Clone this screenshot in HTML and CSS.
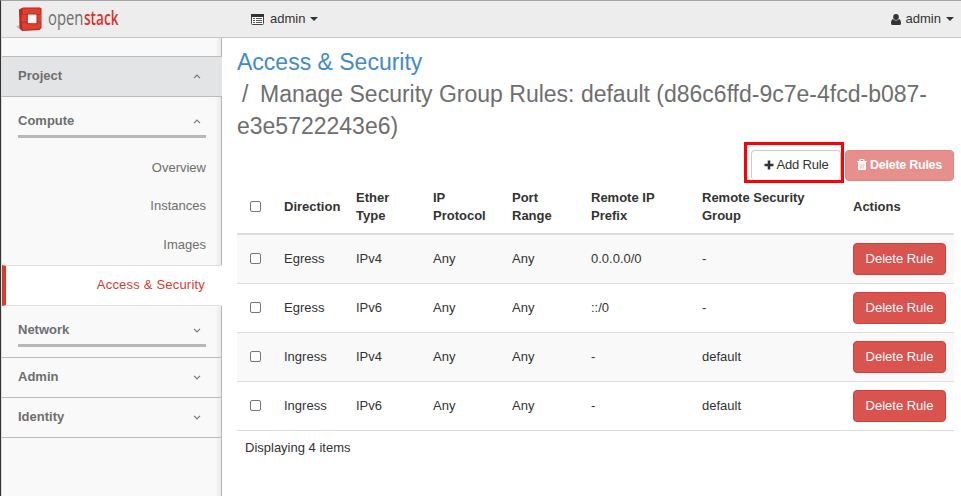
FILE: index.html
```html
<!DOCTYPE html>
<html lang="en">
<head>
<meta charset="utf-8">
<title>Manage Security Group Rules</title>
<link rel="stylesheet" href="styles.css">
</head>
<body>
<div class="app">
  <header class="topbar">
    <svg class="logo" width="110" height="36" viewBox="0 -4 110 36">
      <path d="M0 21.500l5-2v6z" fill="#bbb"/>
      <path d="M3 4.500l4-2h17l1.500 1v19.500l-2 2L6 26l-2.500-3z" fill="#b3281f"/>
      <path d="M6.500 3.500h18v6h-18zM5.500 10h19.500v6.800H5.500zM6 17.600h18.500v6L6.500 25z" fill="#e2402f"/>
      <path d="M10.500 8.500h11v10.800h-11z" fill="#b3281f"/>
      <path d="M11.800 9.500h8.700v8.700h-8.700z" fill="#f4f4f4"/>
    </svg>
    <div class="wordmark"><span class="word-open">open</span><span class="word-stack">stack</span></div>
    <div class="menu project-menu">
      <svg width="13" height="11" viewBox="0 0 13 11"><rect x=".5" y=".5" width="12" height="10" rx="1" fill="#fff" stroke="#444"/><path d="M0 0h13v3H0z" fill="#333"/><path d="M2 4.500h2M5 4.500h6M2 6.500h2M5 6.500h6M2 8.500h2M5 8.500h6" stroke="#555"/></svg>
      <span>admin</span><i class="caret"></i>
    </div>
    <div class="menu user-menu">
      <svg width="10" height="11" viewBox="0 0 10 11"><ellipse cx="5" cy="3" rx="2.800" ry="3" fill="#333"/><path d="M2 5Q5 8 8 5Q10 5.500 10 9.500Q10 11 8.500 11h-7Q0 11 0 9.500Q0 5.500 2 5z" fill="#333"/></svg>
      <span>admin</span><i class="caret"></i>
    </div>
  </header>
  <div class="body">
    <nav class="sidebar">
      <div class="panel open"><span>Project</span><svg class="chev" viewBox="0 0 8 5"><path d="M1 4.200l3-3 3 3"/></svg></div>
      <div class="group compute"><span>Compute</span><svg class="chev" viewBox="0 0 8 5"><path d="M1 4.200l3-3 3 3"/></svg></div>
      <a class="item">Overview</a>
      <a class="item">Instances</a>
      <a class="item last">Images</a>
      <a class="item active">Access &amp; Security</a>
      <div class="group network"><span>Network</span><svg class="chev" viewBox="0 0 8 5"><path d="M1 .8l3 3 3-3"/></svg></div>
      <div class="panel first"><span>Admin</span><svg class="chev" viewBox="0 0 8 5"><path d="M1 .8l3 3 3-3"/></svg></div>
      <div class="panel"><span>Identity</span><svg class="chev" viewBox="0 0 8 5"><path d="M1 .8l3 3 3-3"/></svg></div>
    </nav>
    <main class="content">
      <h1><a>Access &amp; Security</a><br><span class="slash">/</span>Manage Security Group Rules: default (d86c6ffd-9c7e-4fcd-b087-<br>e3e5722243e6)</h1>
      <div class="actions">
        <div class="highlight"><button class="btn add"><svg width="10" height="10" viewBox="0 0 10 10"><path d="M5 .5v9M.5 5h9" stroke="#333" stroke-width="2.600"/></svg>Add Rule</button></div>
        <button class="btn del-all"><svg width="10" height="11" viewBox="0 0 10 11"><path d="M3 2V.5h4V2M0 2.500h10" fill="none" stroke="#fff"/><path d="M1 3h8v7.200q0 .8-.8.8H1.800Q1 11 1 10.200z" fill="#fff"/><path d="M3.200 4.500v5M5 4.500v5M6.800 4.500v5" stroke="#e78f8c" stroke-width=".6"/></svg>Delete Rules</button>
      </div>
      <table>
        <colgroup><col class="c1"><col class="c2"><col class="c3"><col class="c4"><col class="c5"><col class="c6"><col class="c7"><col class="c8"></colgroup>
        <thead><tr><th><i class="check"></i></th><th>Direction</th><th>Ether<br>Type</th><th>IP<br>Protocol</th><th>Port<br>Range</th><th>Remote IP<br>Prefix</th><th>Remote Security<br>Group</th><th>Actions</th></tr></thead>
        <tbody>
          <tr><td><i class="check"></i></td><td>Egress</td><td>IPv4</td><td>Any</td><td>Any</td><td>0.0.0.0/0</td><td>-</td><td><button class="btn danger">Delete Rule</button></td></tr>
          <tr><td><i class="check"></i></td><td>Egress</td><td>IPv6</td><td>Any</td><td>Any</td><td>::/0</td><td>-</td><td><button class="btn danger">Delete Rule</button></td></tr>
          <tr><td><i class="check"></i></td><td>Ingress</td><td>IPv4</td><td>Any</td><td>Any</td><td>-</td><td>default</td><td><button class="btn danger">Delete Rule</button></td></tr>
          <tr><td><i class="check"></i></td><td>Ingress</td><td>IPv6</td><td>Any</td><td>Any</td><td>-</td><td>default</td><td><button class="btn danger">Delete Rule</button></td></tr>
        </tbody>
      </table>
      <p class="count">Displaying 4 items</p>
    </main>
  </div>
</div>
</body>
</html>
```
FILE: styles.css
```css
* { box-sizing: border-box; }
body { margin: 0; background: #fff; color: #333; font: 13px/18px "Liberation Sans", Arial, sans-serif; }
.app { height: 496px; overflow: hidden; display: flex; flex-direction: column; border-left: 1px solid #333; border-top: 1px solid #a5a5a5; }
.topbar { height: 37px; flex: none; display: flex; align-items: center; background: #ededed; border-bottom: 1px solid #c6c6c6; border-left: 1px solid #ddd; }
.logo { width: 32px; height: 36px; flex: none; margin-left: 14px; margin-top: -1px; }
.logo { width: 110px; margin-right: -78px; }
.wordmark { display: flex; width: 78px; height: 28px; margin-top: -3px; font: 20px/28px "Open Sans", sans-serif; color: #6f6f6f; }
.word-open { width: 36px; transform: scaleX(.74); transform-origin: 0 0; }
.word-stack { color: #d8342b; font-weight: 600; transform: scaleX(.68); transform-origin: 0 0; }
.menu { display: flex; align-items: center; height: 18px; }
.menu span { margin: 0 5px 0 6px; }
.project-menu { margin-left: 125px; }
.user-menu { margin-left: auto; margin-right: 7px; }
.user-menu span { margin-left: 5px; }
.caret { border: 4px solid transparent; border-top-color: #333; border-bottom: 0; }
.body { flex: 1; display: flex; min-height: 0; }
.sidebar { width: 221px; flex: none; padding-top: 18px; background: linear-gradient(to left, #e9e9e9, #f9f9f9 6px); border-right: 1px solid #bbb; border-left: 1px solid #ddd; color: #6e6e6e; }
.panel, .group { display: flex; justify-content: space-between; font-weight: bold; padding-right: 20px; padding-left: 16px; }
.panel { height: 40px; align-items: center; border-bottom: 1px solid #bbb; }
.panel span { margin-top: -1px; }
.panel.open { height: 41px; background: #e2e4e5; border-top: 1px solid #bbb; margin-right: -1px; padding-right: 21px; }
.panel.open span { margin-top: -2px; }
.panel.first { border-top: 1px solid #bbb; height: 41px; }
.chev { width: 8px; height: 5px; fill: none; stroke: #777; stroke-width: 1.200; align-self: center; }
.group { margin: 0 15px 0 16px; padding: 0 5px 5px 0; border-bottom: 3px solid #b8b8b8; }
.compute { margin-top: 15px; margin-bottom: 11px; }
.network { margin-top: 15px; margin-bottom: 10px; }
.item { display: block; text-align: right; padding: 10px 15px 10px 0; height: 38px; letter-spacing: 0; }
.item.last { height: 40px; padding-top: 11px; }
.item.active { height: 41px; margin-right: -1px; padding-right: 17px; background: #fff; color: #d9392b; border-top: 1px solid #e0e0e0; border-bottom: 1px solid #e0e0e0; border-left: 4px solid #df3826; letter-spacing: .2px; }
.content { flex: 1; padding: 8px 7px 0 15px; min-width: 0; }
h1 { margin: 0; font-size: 23px; line-height: 32px; font-weight: normal; color: #6e6e6e; white-space: nowrap; }
h1 a { color: #428bca; }
.slash { display: inline-block; width: 23px; padding-left: 5px; }
.actions { display: flex; justify-content: flex-end; height: 41px; }
.highlight { width: 100px; height: 41px; border: 3px solid #f00; padding: 5px 0 0 4px; margin-right: 1px; }
.btn { font: 13px/18px "Liberation Sans", Arial, sans-serif; border-radius: 4px; border: 1px solid #ccc; background: #fff; color: #333; display: flex; align-items: center; justify-content: center; padding: 0; white-space: nowrap; }
.add { width: 90px; height: 30px; gap: 3px; padding-bottom: 2px; border-bottom-width: 0; letter-spacing: -.2px; }
.del-all { width: 109px; height: 31px; margin-top: 8px; padding-bottom: 2px; gap: 3px; background: #e78f8c; border-color: #e48480; color: #fff; font-weight: bold; font-size: 12.500px; letter-spacing: -.25px; }
.danger { width: 93px; height: 32px; background: #d9534f; border-color: #d43f3a; color: #fff; }
table { width: 717px; table-layout: fixed; border-collapse: separate; border-spacing: 0; }
.c1 { width: 39px; } .c2 { width: 72px; } .c3 { width: 77px; } .c4 { width: 79px; }
.c5 { width: 79px; } .c6 { width: 111px; } .c7 { width: 151px; } .c8 { width: 109px; }
th { height: 52px; padding: 0 0 2px 8px; text-align: left; border-bottom: 2px solid #ddd; }
td { height: 49px; padding: 0 0 0 8px; border-bottom: 1px solid #ddd; }
tbody tr:nth-child(odd) { background: #f9f9f9; }
.check { display: block; width: 11px; height: 11px; margin-left: 5px; margin-top: -1px; border: 1px solid #777; border-radius: 2px; background: #fff; }
.count { margin: 8px 0 0 8px; }
```
